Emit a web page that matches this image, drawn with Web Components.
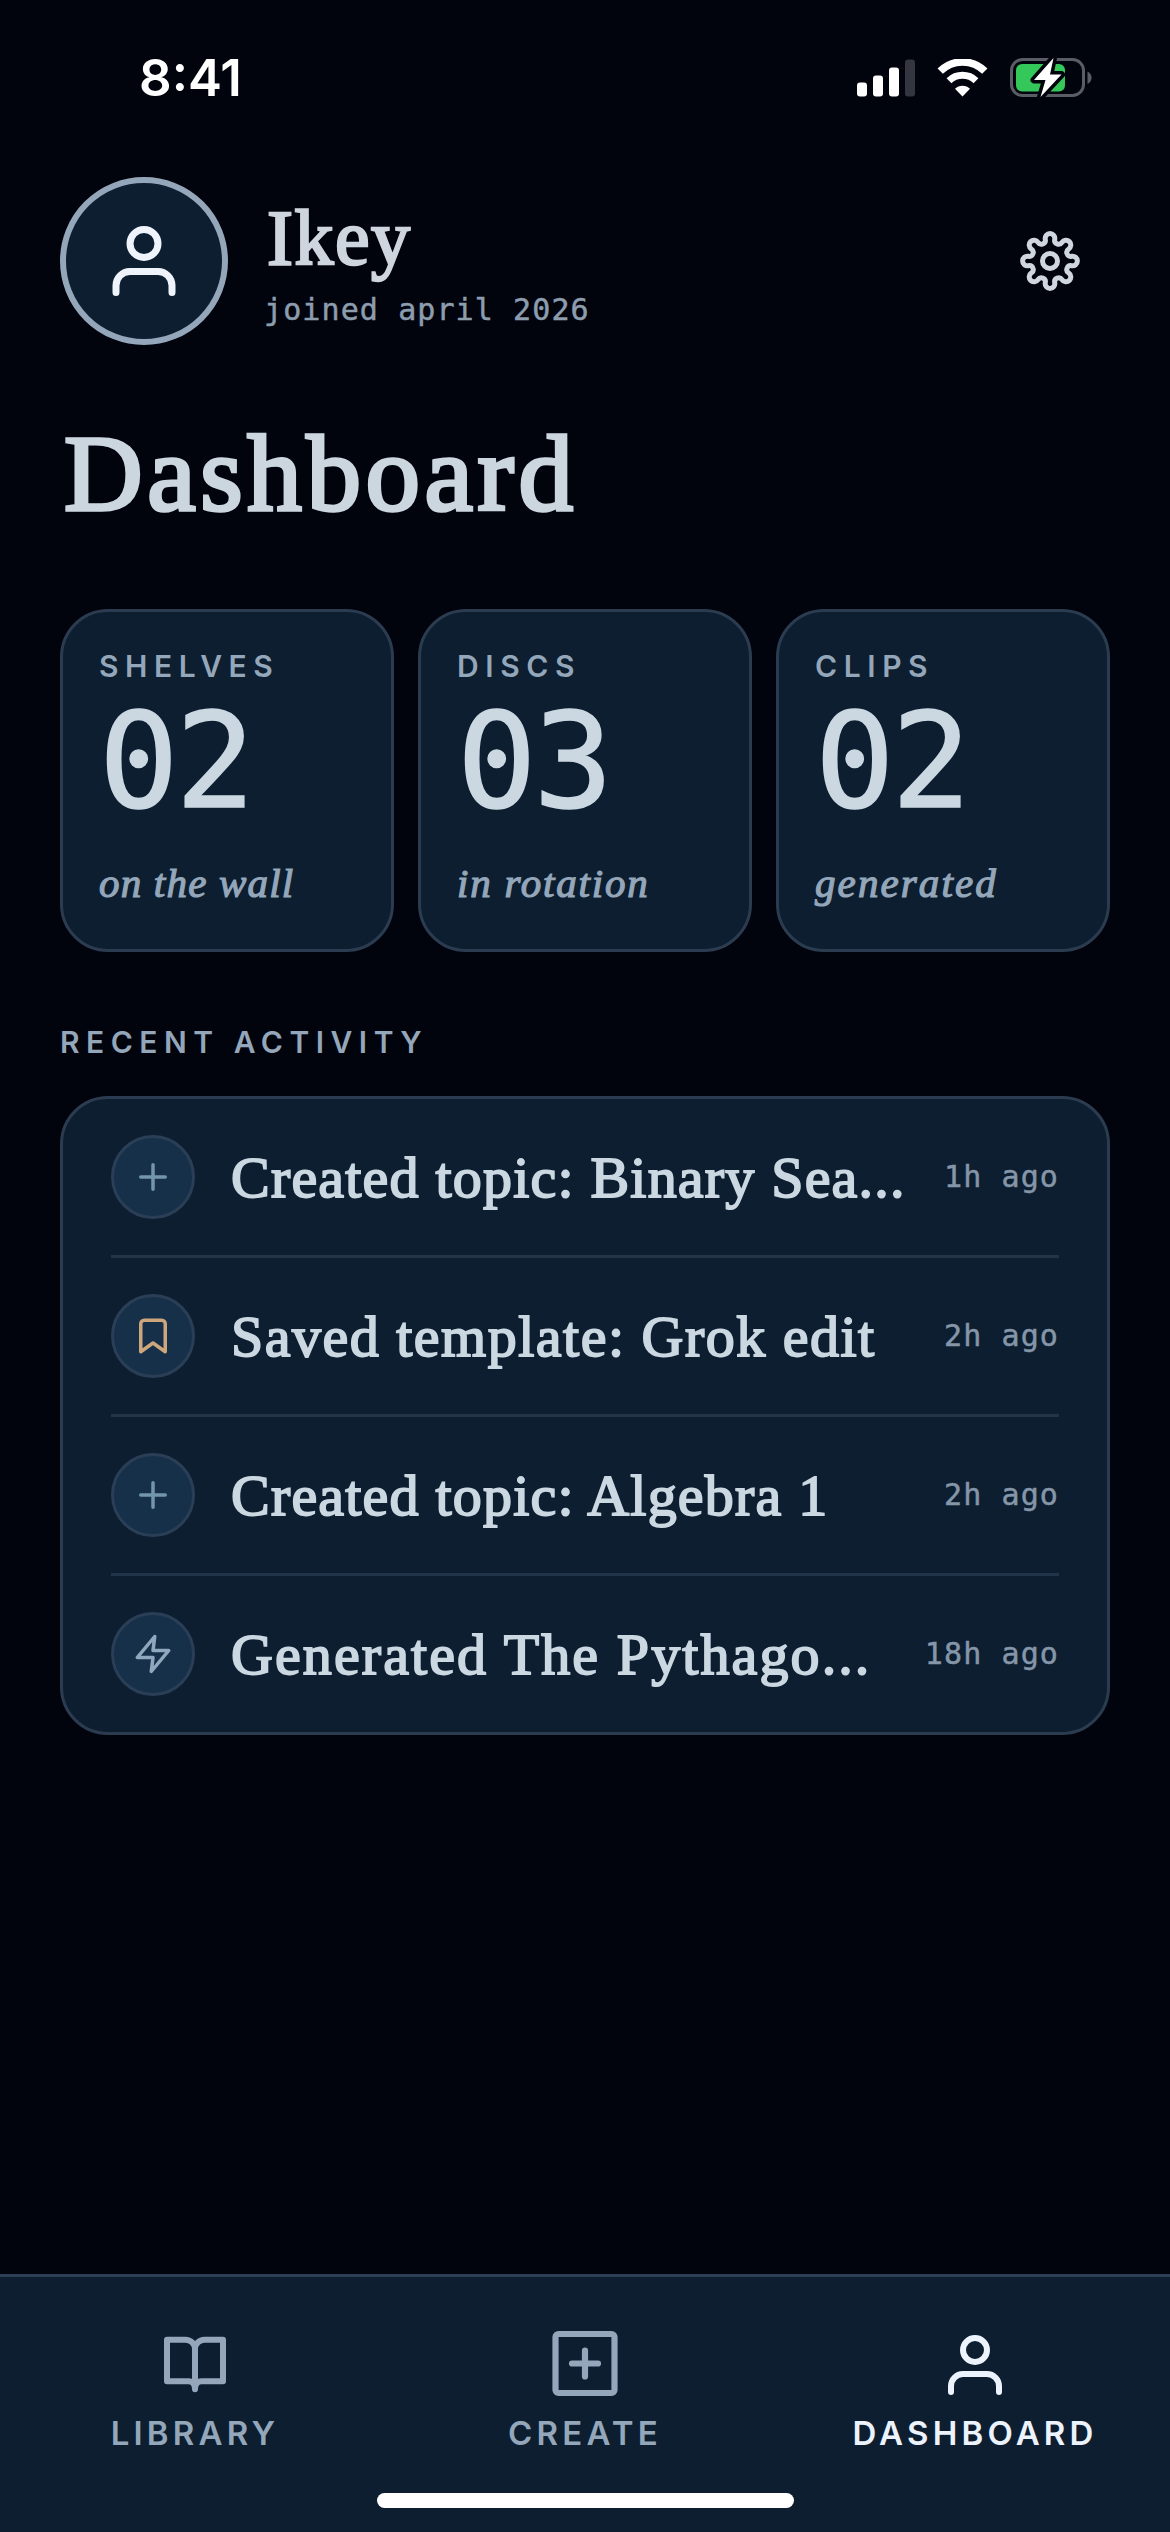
<!DOCTYPE html>
<html lang="en">
<head>
<meta charset="utf-8">
<title>Dashboard</title>
<style>
html, body { margin: 0; padding: 0; background: #01030d; }
body {
    --surface: #0c1e30;
    --line: #2c3c50;
    --text: #cbd8e2;
    --muted: #94a6b9;
    --serif: "Liberation Serif", serif;
    --mono: "DejaVu Sans Mono", monospace;
    --sans: Inter, sans-serif;
    width: 1170px;
    height: 2532px;
    overflow: hidden;
    font-family: var(--sans);
    color: var(--text);
}
</style>
</head>
<body>
<dash-app></dash-app>
<script>
class DashElement extends HTMLElement {
    constructor() {
        super();
        this.template = document.createElement('template');
        this.attachShadow({ mode: 'open' });
    }
    connectedCallback() {
        this.render();
    }
    render() {
        this.shadowRoot.innerHTML = '';
        this.template.innerHTML = this.html;
        this.shadowRoot.appendChild(this.template.content.cloneNode(true));
    }
}

// eight round teeth joined by concave arcs
function gearPath(cx, cy) {
    const lobe = 4.8, dip = 4, dist = 22.6;
    const step = Math.PI / 8;
    const half = dist * Math.sin(step);
    const dipDist = dist * Math.cos(step) + Math.sqrt((lobe + dip) ** 2 - half ** 2);
    const at = (r, a) => [cx + r * Math.sin(a), cy - r * Math.cos(a)];
    const touch = (a, side) => {
        const l = at(dist, a);
        const v = at(dipDist, a + side * step);
        const k = lobe / (lobe + dip);
        return [l[0] + (v[0] - l[0]) * k, l[1] + (v[1] - l[1]) * k].map(n => n.toFixed(2)).join(' ');
    };
    let d = `M${touch(0, -1)}`;
    for (let i = 0; i < 8; i++) {
        const a = i * 2 * step;
        d += `A${lobe} ${lobe} 0 1 1 ${touch(a, 1)}A${dip} ${dip} 0 0 0 ${touch(a + 2 * step, -1)}`;
    }
    return d + 'z';
}

const ICONS = {
    user: { box: 24, width: 2, body: '<path d="M20 21v-2a4 4 0 0 0-4-4H8a4 4 0 0 0-4 4v2"/><circle cx="12" cy="7" r="4"/>' },
    plus: { box: 24, width: 2, body: '<path d="M12 5v14M5 12h14"/>' },
    bookmark: { box: 24, width: 2, body: '<path d="M19 21l-7-5-7 5V5a2 2 0 0 1 2-2h10a2 2 0 0 1 2 2z"/>' },
    zap: { box: 24, width: 2, body: '<path d="M13 2L3 14h9l-1 8 10-12h-9l1-8z"/>' },
    gear: { box: 72, width: 5, body: `<path d="${gearPath(36, 36)}"/><circle cx="36" cy="36" r="7.5"/>` },
    book: { box: 72, width: 6, body: '<path d="M36 20a9.500 9.500 0 0 0-9.500-9.300H8v41.500h21.500q6.500 0 6.500 8q0-8 6.500-8H64V10.700H45.500A9.500 9.500 0 0 0 36 20v38"/>' },
    create: { box: 72, width: 6.2, body: '<rect x="6.500" y="5" width="59" height="59" rx="3"/><path d="M36 21.500v26M23 34.500h26"/>' }
};

class DashIcon extends DashElement {
    static get tag() { return 'dash-icon'; }
    get html() {
        const icon = ICONS[this.getAttribute('name')];
        const size = this.getAttribute('size') || 72;
        return `
        <style>
        :host { display: block; flex: 0 0 auto; width: ${size}px; height: ${size}px; }
        svg { display: block; overflow: visible; }
        </style>
        <svg width="${size}" height="${size}" viewBox="0 0 ${icon.box} ${icon.box}" fill="none" stroke="currentColor"
            stroke-width="${icon.width}" stroke-linecap="round" stroke-linejoin="round">${icon.body}</svg>`;
    }
}
window.customElements.define(DashIcon.tag, DashIcon);

class DashStatus extends DashElement {
    static get tag() { return 'dash-status'; }
    get html() {
        return `
        <style>
        :host {
            box-sizing: border-box;
            display: flex;
            justify-content: space-between;
            align-items: center;
            height: 156px;
            padding: 0 78px 0 139px;
            color: #fff;
        }
        time { font-size: 51px; font-weight: 600; line-height: 60px; }
        .icons { display: flex; align-items: center; gap: 22px; }
        svg { display: block; }
        </style>
        <time><slot></slot></time>
        <div class="icons">
            <svg width="58" height="38" viewBox="0 0 58 38" fill="#fff">
                <rect x="0" y="23.500" width="10" height="14" rx="3"/>
                <rect x="16" y="16.500" width="10" height="21" rx="3"/>
                <rect x="32" y="8.500" width="10" height="29" rx="3"/>
                <rect x="48" y="0.500" width="10" height="37" rx="3" fill="#33363f"/>
            </svg>
            <svg width="51" height="38" viewBox="0 0 51 38" fill="none" stroke="#fff">
                <path d="M3.200 12.200A31.500 31.500 0 0 1 47.800 12.200" stroke-width="7.500"/>
                <path d="M12 21.800A19.500 19.500 0 0 1 39 21.800" stroke-width="7"/>
                <path d="M25.500 37.500L18 29.800A10.500 10.500 0 0 1 33 29.800z" fill="#fff" stroke="none"/>
            </svg>
            <svg width="82" height="42" viewBox="0 0 82 42">
                <rect x="1.500" y="2.500" width="72" height="36" rx="11" fill="none" stroke="#5b5d66" stroke-width="3"/>
                <rect x="6" y="7" width="49" height="27.500" rx="6" fill="#34c759"/>
                <path d="M77.500 14.500c5.500 2.500 5.500 10 0 12.500z" fill="#5b5d66"/>
                <path d="M43.500 1L24 23h11.500L30.500 40 51.500 17.500H40z" fill="#fff" stroke="#01030d" stroke-width="7" stroke-linejoin="round" paint-order="stroke"/>
            </svg>
        </div>`;
    }
}
window.customElements.define(DashStatus.tag, DashStatus);

class DashProfile extends DashElement {
    static get tag() { return 'dash-profile'; }
    get html() {
        return `
        <style>
        :host { display: flex; align-items: center; gap: 36px; height: 168px; }
        .avatar {
            box-sizing: border-box;
            display: grid;
            place-items: center;
            width: 168px;
            height: 168px;
            border: 6px solid #94a6b9;
            border-radius: 50%;
            background: var(--surface);
            color: #eff4fc;
        }
        .who { flex: 1; display: flex; flex-direction: column; gap: 12px; padding-top: 1px; }
        .name {
            padding-left: 3px;
            font: 78px/84px var(--serif);
            letter-spacing: 1.500px;
            color: #cfd5de;
            -webkit-text-stroke: 2.400px currentColor;
        }
        .joined {
            font: 30px/36px var(--mono);
            letter-spacing: 1.100px;
            color: #8c9dae;
            -webkit-text-stroke: .500px currentColor;
        }
        .settings { margin-right: 24px; color: #d0d6df; }
        </style>
        <div class="avatar"><dash-icon name="user" size="84"></dash-icon></div>
        <div class="who">
            <div class="name"><slot name="name"></slot></div>
            <div class="joined"><slot name="joined"></slot></div>
        </div>
        <dash-icon class="settings" name="gear"></dash-icon>`;
    }
}
window.customElements.define(DashProfile.tag, DashProfile);

class DashStat extends DashElement {
    static get tag() { return 'dash-stat'; }
    get html() {
        return `
        <style>
        :host {
            box-sizing: border-box;
            display: block;
            height: 343px;
            padding: 36px;
            border: 3px solid var(--line);
            border-radius: 48px;
            background: var(--surface);
        }
        .label { font-size: 30px; line-height: 36px; font-weight: 600; letter-spacing: 6.600px; color: var(--muted); }
        .value {
            margin-top: 5px;
            font: 132px/144px var(--mono);
            letter-spacing: -3px;
            -webkit-text-stroke: 1.600px currentColor;
        }
        .note {
            margin-top: 26px;
            font: italic 41px/48px var(--serif);
            letter-spacing: var(--track, 1.200px);
            white-space: nowrap;
            color: var(--muted);
            -webkit-text-stroke: 1.200px currentColor;
        }
        </style>
        <div class="label">${this.getAttribute('label')}</div>
        <div class="value">${this.getAttribute('value')}</div>
        <div class="note"><slot></slot></div>`;
    }
}
window.customElements.define(DashStat.tag, DashStat);

class DashActivity extends DashElement {
    static get tag() { return 'dash-activity'; }
    get html() {
        return `
        <style>
        :host { display: flex; align-items: center; gap: 36px; height: 156px; }
        .badge {
            box-sizing: border-box;
            flex: 0 0 auto;
            display: grid;
            place-items: center;
            width: 84px;
            height: 84px;
            border: 3px solid #2a3e56;
            border-radius: 50%;
            background: #17304a;
            color: var(--tone, #7495ae);
        }
        .title {
            flex: 1;
            padding-top: 1px;
            font: 58px/72px var(--serif);
            letter-spacing: var(--track, 1.200px);
            white-space: nowrap;
            -webkit-text-stroke: 1.800px currentColor;
        }
        .when {
            font: 30px/36px var(--mono);
            letter-spacing: 1.100px;
            white-space: nowrap;
            color: #8596a9;
            -webkit-text-stroke: .500px currentColor;
        }
        </style>
        <div class="badge"><dash-icon name="${this.getAttribute('icon')}" size="42"></dash-icon></div>
        <div class="title"><slot></slot></div>
        <div class="when">${this.getAttribute('when')}</div>`;
    }
}
window.customElements.define(DashActivity.tag, DashActivity);

class DashPanel extends DashElement {
    static get tag() { return 'dash-panel'; }
    get html() {
        return `
        <style>
        :host { display: block; }
        h2 { margin: 0 0 36px; font-size: 30px; line-height: 36px; font-weight: 600; letter-spacing: 6.500px; color: var(--muted); }
        .list {
            padding: 0 48px;
            border: 3px solid var(--line);
            border-radius: 48px;
            background: var(--surface);
        }
        ::slotted(:not(:first-child)) { border-top: 3px solid #223447; }
        </style>
        <h2>${this.getAttribute('heading')}</h2>
        <div class="list"><slot></slot></div>`;
    }
}
window.customElements.define(DashPanel.tag, DashPanel);

class DashTab extends DashElement {
    static get tag() { return 'dash-tab'; }
    get html() {
        return `
        <style>
        :host { display: flex; flex-direction: column; align-items: center; gap: 12px; color: var(--muted); }
        :host([active]) { color: #ecf3fd; }
        .label { font-size: 33px; line-height: 40px; font-weight: 600; letter-spacing: 4.200px; }
        </style>
        <dash-icon name="${this.getAttribute('icon')}"></dash-icon>
        <div class="label"><slot></slot></div>`;
    }
}
window.customElements.define(DashTab.tag, DashTab);

class DashTabs extends DashElement {
    static get tag() { return 'dash-tabs'; }
    get html() {
        return `
        <style>
        :host {
            box-sizing: border-box;
            display: block;
            height: 258px;
            padding-top: 52px;
            border-top: 3px solid #2d3e56;
            background: var(--surface);
        }
        nav { display: grid; grid-template-columns: repeat(3, 1fr); }
        .home { width: 417px; height: 15px; margin: 40px auto 0; border-radius: 8px; background: #fff; }
        </style>
        <nav><slot></slot></nav>
        <div class="home"></div>`;
    }
}
window.customElements.define(DashTabs.tag, DashTabs);

class DashApp extends DashElement {
    static get tag() { return 'dash-app'; }
    get html() {
        return `
        <style>
        :host { display: flex; flex-direction: column; height: 2532px; }
        main { flex: 1; padding: 21px 60px 0; }
        h1 {
            margin: 69px 0 75px;
            padding-left: 4px;
            font: 109px/120px var(--serif);
            letter-spacing: 4.600px;
            color: #ccd6df;
            -webkit-text-stroke: 3.600px currentColor;
        }
        .stats { display: grid; grid-template-columns: repeat(3, 1fr); gap: 24px; margin-bottom: 72px; }
        </style>
        <dash-status>8:41</dash-status>
        <main>
            <dash-profile>
                <span slot="name">Ikey</span>
                <span slot="joined">joined april 2026</span>
            </dash-profile>
            <h1>Dashboard</h1>
            <div class="stats">
                <dash-stat label="SHELVES" value="02">on the wall</dash-stat>
                <dash-stat label="DISCS" value="03" style="--track: 1.800px">in rotation</dash-stat>
                <dash-stat label="CLIPS" value="02" style="--track: 2.100px">generated</dash-stat>
            </div>
            <dash-panel heading="RECENT ACTIVITY">
                <dash-activity icon="plus" when="1h ago">Created topic: Binary Sea...</dash-activity>
                <dash-activity icon="bookmark" when="2h ago" style="--tone: #cda67c; --track: 1.500px">Saved template: Grok edit</dash-activity>
                <dash-activity icon="plus" when="2h ago">Created topic: Algebra 1</dash-activity>
                <dash-activity icon="zap" when="18h ago" style="--tone: #90a8be; --track: 2.100px">Generated The Pythago...</dash-activity>
            </dash-panel>
        </main>
        <dash-tabs>
            <dash-tab icon="book">LIBRARY</dash-tab>
            <dash-tab icon="create">CREATE</dash-tab>
            <dash-tab icon="user" active>DASHBOARD</dash-tab>
        </dash-tabs>`;
    }
}
window.customElements.define(DashApp.tag, DashApp);
</script>
</body>
</html>
